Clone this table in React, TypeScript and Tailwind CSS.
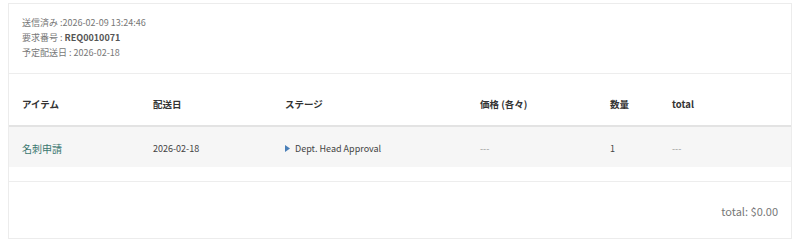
import React from "react";

export default function App() {
  const font = { fontFamily: '"Noto Sans CJK JP", "Noto Sans", sans-serif' };
  return (
    <div className="w-[800px] h-[244px] bg-white pt-[3px]" style={font}>
      <div className="mx-2 w-[784px] border border-[#ececec] bg-white">
        <div className="px-[13px] pt-[11px] pb-[13px] text-[9px] leading-[15px] text-[#777] border-b border-[#ededed]">
          <div>送信済み :2026-02-09 13:24:46</div>
          <div>
            要求番号 : <span className="font-bold text-[#555]">REQ0010071</span>
          </div>
          <div>予定配送日 : 2026-02-18</div>
        </div>
        <div className="grid grid-cols-[131px_132px_195px_130px_62px_1fr] pl-[13px] h-[53px] pt-[10px] items-center text-[9.5px] font-bold text-[#333] border-b-2 border-[#e3e3e3]">
          <div>アイテム</div>
          <div>配送日</div>
          <div>ステージ</div>
          <div>価格 (各々)</div>
          <div>数量</div>
          <div>total</div>
        </div>
        <div className="grid grid-cols-[131px_132px_195px_130px_62px_1fr] pl-[13px] h-[40px] pt-[3px] items-center text-[9px] text-[#444] bg-[#f6f6f6]">
          <div className="text-[10px] text-[#3a7770]">名刺申請</div>
          <div>2026-02-18</div>
          <div className="flex items-center gap-[5px]">
            <svg width="5" height="7" viewBox="0 0 5 7">
              <path d="M0 0 L5 3.5 L0 7 Z" fill="#4a7fb8" />
            </svg>
            <span>Dept. Head Approval</span>
          </div>
          <div className="text-[#999]">---</div>
          <div>1</div>
          <div className="text-[#999]">---</div>
        </div>
        <div className="h-[15px] border-b border-[#ededed]" />
        <div className="h-[56px] pt-[2px] flex items-center justify-end pr-[13px] text-[11px] text-[#777]">
          total: $0.00
        </div>
      </div>
    </div>
  );
}
